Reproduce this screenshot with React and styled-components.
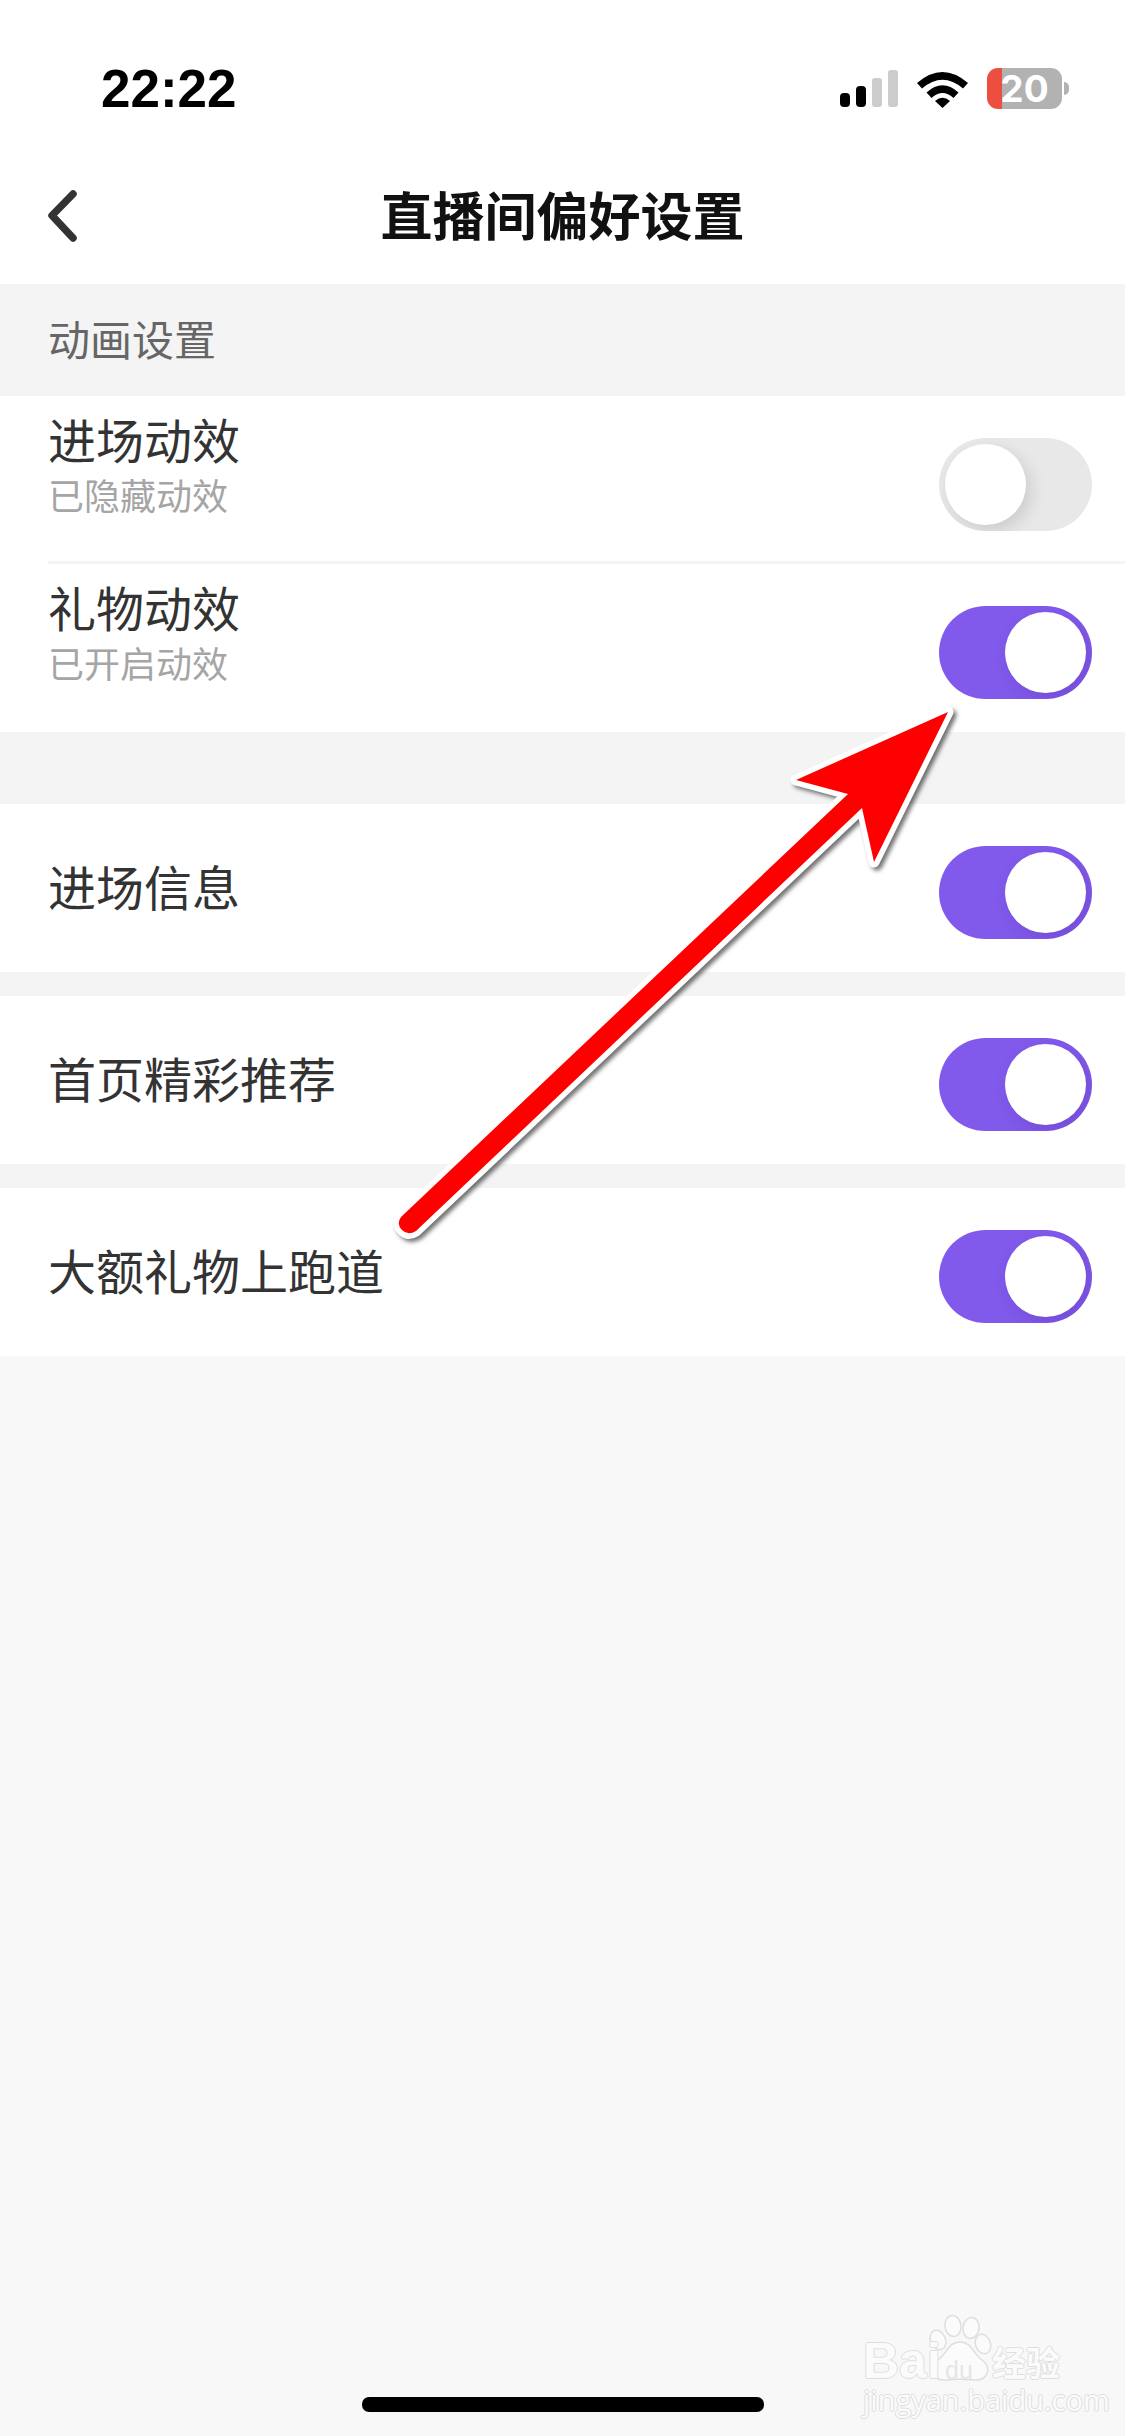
import styled, { createGlobalStyle } from "styled-components";

const GlobalStyle = createGlobalStyle`
  html, body {
    margin: 0;
    padding: 0;
    background: #f8f8f8;
  }
  * {
    box-sizing: border-box;
  }
`;

const Page = styled.div`
  position: relative;
  display: flex;
  flex-direction: column;
  width: 1125px;
  height: 2436px;
  overflow: hidden;
  background: #f8f8f8;
  font-family: "Noto Sans CJK SC", "Noto Sans", sans-serif;
`;

const StatusBar = styled.div`
  display: flex;
  justify-content: space-between;
  align-items: flex-start;
  height: 150px;
  padding: 62px 56px 0 101px;
  background: #fff;
`;

const Time = styled.span`
  font-family: "Liberation Sans", sans-serif;
  font-size: 53px;
  font-weight: 700;
  line-height: 54px;
  color: #000;
`;

const StatusIcons = styled.div`
  display: flex;
  align-items: center;
  gap: 19px;
  margin-top: 6px;
`;

const Battery = styled.div`
  display: flex;
  align-items: center;
  gap: 2px;
`;

const BatteryBody = styled.div`
  display: flex;
  justify-content: center;
  align-items: center;
  width: 75px;
  height: 41px;
  border-radius: 11px;
  background: linear-gradient(90deg, #ec4f3f 0 15px, #b2b2b2 15px);
  font-family: "Inter", sans-serif;
  font-size: 37px;
  font-weight: 700;
  line-height: 41px;
  color: #fff;
`;

const BatteryTip = styled.div`
  width: 5px;
  height: 13px;
  border-radius: 0 6px 6px 0;
  background: #b2b2b2;
`;

const Header = styled.header`
  position: relative;
  display: flex;
  justify-content: center;
  align-items: center;
  height: 134px;
  padding-bottom: 6px;
  background: #fff;
`;

const BackButton = styled.svg`
  position: absolute;
  left: 40px;
  top: 30px;
`;

const Title = styled.h1`
  margin: 0;
  font-size: 52px;
  font-weight: 700;
  line-height: 60px;
  color: #111;
`;

const SectionLabel = styled.div`
  display: flex;
  align-items: center;
  height: 112px;
  padding: 0 0 6px 48px;
  background: #f4f4f4;
  font-size: 42px;
  color: #666;
`;

const Group = styled.section`
  background: #fff;
`;

const Gap = styled.div`
  height: ${(p) => p.$size}px;
  background: #f4f4f4;
`;

const Row = styled.div`
  display: flex;
  justify-content: space-between;
  align-items: flex-start;
  height: 168px;
  margin-left: 48px;
  padding: 42px 33px 0 0;
  border-bottom: ${(p) => (p.$divider ? "3px solid #f4f4f4" : "none")};
`;

const Labels = styled.div`
  display: flex;
  flex-direction: column;
  margin-top: ${(p) => p.$offset}px;
`;

const RowTitle = styled.div`
  font-size: 48px;
  line-height: 56px;
  color: #333;
`;

const RowHint = styled.div`
  margin-top: 6px;
  font-size: 36px;
  line-height: 44px;
  color: #a5a5a5;
`;

const Track = styled.div`
  display: flex;
  justify-content: ${(p) => (p.$on ? "flex-end" : "flex-start")};
  width: 153px;
  height: 93px;
  padding: 6px;
  overflow: hidden;
  border-radius: 47px;
  background: ${(p) => (p.$on ? "#825aeb" : "#e8e8e8")};
`;

const Knob = styled.div`
  width: 81px;
  height: 81px;
  border-radius: 50%;
  background: #fff;
  box-shadow: ${(p) =>
    p.$on
      ? "5px 6px 16px rgba(60, 30, 140, 0.22)"
      : "5px 6px 16px rgba(0, 0, 0, 0.12)"};
`;

const HomeBar = styled.div`
  flex: none;
  width: 402px;
  height: 15px;
  margin: auto auto 24px;
  border-radius: 7px;
  background: #000;
`;

const ArrowOverlay = styled.svg`
  position: absolute;
  left: 0;
  top: 0;
  filter: drop-shadow(3px 3px 2px rgba(0, 0, 0, 0.55));
  pointer-events: none;
`;

const Watermark = styled.div`
  position: absolute;
  left: 860px;
  top: 2314px;
  width: 206px;
  height: 98px;
`;

const WatermarkPaw = styled.svg`
  position: absolute;
  left: 0;
  top: 0;
`;

const watermarkText = `
  position: absolute;
  color: #fbfbfb;
  white-space: nowrap;
  text-shadow: -1px 0 #dedede, 1px 0 #dedede, 0 -1px #dedede, 0 1px #dedede;
`;

const MarkBai = styled.span`
  ${watermarkText}
  left: 3px;
  top: 25px;
  font-family: "Liberation Sans", sans-serif;
  font-size: 50px;
  font-weight: 700;
  line-height: 44px;
`;

const MarkDu = styled.span`
  ${watermarkText}
  left: 85px;
  top: 43px;
  font-family: "Liberation Sans", sans-serif;
  font-size: 25px;
  line-height: 26px;
  color: #e6e6e6;
  text-shadow: none;
`;

const MarkJingyan = styled.span`
  ${watermarkText}
  left: 132px;
  top: 28px;
  font-size: 34px;
  font-weight: 700;
  line-height: 40px;
`;

const MarkDomain = styled.span`
  ${watermarkText}
  left: 3px;
  top: 70px;
  font-family: "Open Sans", sans-serif;
  font-size: 29px;
  line-height: 32px;
`;

const ArrowShape =
  "M948 712 L796 780 L848 794 L401 1217 Q396 1224 402 1230 Q408 1236 416 1231 L862 808 L874 862 Z";

const Toggle = ({ on }) => (
  <Track $on={on}>
    <Knob $on={on} />
  </Track>
);

const App = () => (
  <Page>
    <GlobalStyle />
    <StatusBar>
      <Time>22:22</Time>
      <StatusIcons>
        <svg width="58" height="38" viewBox="0 0 58 38">
          <rect x="0" y="23" width="10" height="14" rx="4" fill="#000" />
          <rect x="16" y="16" width="10" height="21" rx="4" fill="#000" />
          <rect x="32" y="8" width="10" height="29" rx="3" fill="#ccc" />
          <rect x="48" y="0" width="10" height="37" rx="3" fill="#ccc" />
        </svg>
        <svg width="51" height="38" viewBox="0 0 51 38">
          <path d="M0 13 Q25.5 -9 51 13 L46 18.5 Q25.5 1 5 18.5 Z" fill="#000" />
          <path d="M9.5 22.5 Q25.5 8 41.5 22.5 L36.5 28 Q25.5 18 14.5 28 Z" fill="#000" />
          <path d="M18 31 Q25.5 24.5 33 31 L25.5 38 Z" fill="#000" />
        </svg>
        <Battery>
          <BatteryBody>20</BatteryBody>
          <BatteryTip />
        </Battery>
      </StatusIcons>
    </StatusBar>

    <Header>
      <BackButton width="44" height="70" viewBox="0 0 44 70">
        <path
          d="M33 14 L12 35.5 L33 58"
          fill="none"
          stroke="#333"
          strokeWidth="7.5"
          strokeLinecap="round"
          strokeLinejoin="round"
        />
      </BackButton>
      <Title>直播间偏好设置</Title>
    </Header>

    <SectionLabel>动画设置</SectionLabel>
    <Group>
      <Row $divider>
        <Labels $offset={-28}>
          <RowTitle>进场动效</RowTitle>
          <RowHint>已隐藏动效</RowHint>
        </Labels>
        <Toggle on={false} />
      </Row>
      <Row>
        <Labels $offset={-28}>
          <RowTitle>礼物动效</RowTitle>
          <RowHint>已开启动效</RowHint>
        </Labels>
        <Toggle on />
      </Row>
    </Group>
    <Gap $size={72} />
    <Group>
      <Row>
        <Labels $offset={11}>
          <RowTitle>进场信息</RowTitle>
        </Labels>
        <Toggle on />
      </Row>
    </Group>
    <Gap $size={24} />
    <Group>
      <Row>
        <Labels $offset={11}>
          <RowTitle>首页精彩推荐</RowTitle>
        </Labels>
        <Toggle on />
      </Row>
    </Group>
    <Gap $size={24} />
    <Group>
      <Row>
        <Labels $offset={11}>
          <RowTitle>大额礼物上跑道</RowTitle>
        </Labels>
        <Toggle on />
      </Row>
    </Group>

    <HomeBar />

    <ArrowOverlay width="1125" height="2436" viewBox="0 0 1125 2436">
      <path
        d={ArrowShape}
        fill="#ff0000"
        stroke="#fff"
        strokeWidth="11"
        strokeLinejoin="round"
        paintOrder="stroke"
      />
    </ArrowOverlay>

    <Watermark>
      <WatermarkPaw width="206" height="98" viewBox="0 0 206 98">
        <g fill="#fbfbfb" stroke="#dedede" strokeWidth="1.5">
          <ellipse cx="93" cy="12" rx="8" ry="10.5" transform="rotate(-8 93 12)" />
          <ellipse cx="111" cy="14" rx="8" ry="10.5" transform="rotate(8 111 14)" />
          <ellipse cx="78" cy="26" rx="7.5" ry="10" transform="rotate(-25 78 26)" />
          <ellipse cx="123" cy="30" rx="7.5" ry="10" transform="rotate(-20 123 30)" />
          <path d="M100 28 C112 28 113 40 122 46 C133 54 127 67 114 66 C104 65 96 65 86 66 C73 67 67 54 78 46 C87 40 88 28 100 28 Z" />
        </g>
      </WatermarkPaw>
      <MarkBai>Bai</MarkBai>
      <MarkDu>du</MarkDu>
      <MarkJingyan>经验</MarkJingyan>
      <MarkDomain>jingyan.baidu.com</MarkDomain>
    </Watermark>
  </Page>
);

export default App;
